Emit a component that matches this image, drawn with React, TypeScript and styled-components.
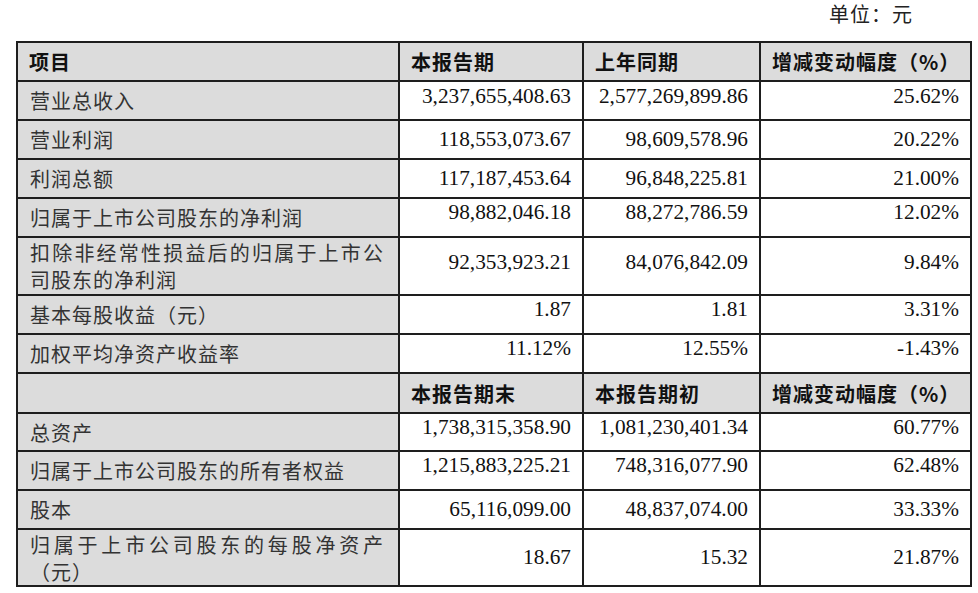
import React from "react";
import styled, { createGlobalStyle } from "styled-components";

const GlobalStyle = createGlobalStyle`
  html, body { margin: 0; padding: 0; background: #ffffff; }
  * { box-sizing: border-box; }
`;

const CJK = `"Noto Sans CJK SC", "Noto Sans", sans-serif`;
const NUM = `"Liberation Serif", "Noto Sans CJK SC", serif`;

const Page = styled.div`
  width: 978px;
  height: 593px;
  overflow: hidden;
  padding-left: 16px;
`;

const UnitLine = styled.div`
  height: 41px;
  padding-right: 65px;
  text-align: right;
  font-family: ${CJK};
  font-size: 20px;
  line-height: 27px;
  letter-spacing: 1px;
  color: #222;
`;

const Table = styled.table`
  width: 954px;
  table-layout: fixed;
  border-collapse: collapse;
  border: 2px solid #1e1e1e;
`;

const Cell = styled.td<{ $h: number; $gray?: boolean }>`
  height: ${(p) => p.$h}px;
  border: 2px solid #1e1e1e;
  background: ${(p) => (p.$gray ? "#dcdcdc" : "#ffffff")};
  vertical-align: middle;
  padding: 0;
`;

const HeadCell = styled(Cell)`
  padding: 0 10px 0 11px;
  font-family: ${CJK};
  font-weight: 700;
  font-size: 20px;
  letter-spacing: 1px;
  color: #111;
  text-align: left;
  white-space: nowrap;
`;

const LabelCell = styled(Cell)<{ $lh: number }>`
  padding: 0 14px 0 12px;
  font-family: ${CJK};
  font-weight: 400;
  font-size: 20px;
  line-height: ${(p) => p.$lh}px;
  letter-spacing: 1px;
  color: #333;
  text-align: justify;
`;

const NumCell = styled(Cell)<{ $shift: number }>`
  padding: 0 11px ${(p) => p.$shift * 2}px 0;
  font-family: ${NUM};
  font-size: 21.3px;
  color: #111;
  text-align: right;
  white-space: nowrap;
`;

type Row = {
  label: string;
  a: string;
  b: string;
  c: string;
  h: number;
  shift: number;
};

const top: Row[] = [
  { label: "营业总收入", a: "3,237,655,408.63", b: "2,577,269,899.86", c: "25.62%", h: 39, shift: 4 },
  { label: "营业利润", a: "118,553,073.67", b: "98,609,578.96", c: "20.22%", h: 39, shift: 0 },
  { label: "利润总额", a: "117,187,453.64", b: "96,848,225.81", c: "21.00%", h: 39, shift: 0 },
  { label: "归属于上市公司股东的净利润", a: "98,882,046.18", b: "88,272,786.59", c: "12.02%", h: 39, shift: 5 },
  { label: "扣除非经常性损益后的归属于上市公司股东的净利润", a: "92,353,923.21", b: "84,076,842.09", c: "9.84%", h: 58, shift: 4 },
  { label: "基本每股收益（元）", a: "1.87", b: "1.81", c: "3.31%", h: 39, shift: 5 },
  { label: "加权平均净资产收益率", a: "11.12%", b: "12.55%", c: "-1.43%", h: 39, shift: 5 },
];

const bottom: Row[] = [
  { label: "总资产", a: "1,738,315,358.90", b: "1,081,230,401.34", c: "60.77%", h: 38, shift: 5 },
  { label: "归属于上市公司股东的所有者权益", a: "1,215,883,225.21", b: "748,316,077.90", c: "62.48%", h: 39, shift: 5 },
  { label: "股本", a: "65,116,099.00", b: "48,837,074.00", c: "33.33%", h: 39, shift: 0 },
  { label: "归属于上市公司股东的每股净资产（元）", a: "18.67", b: "15.32", c: "21.87%", h: 57, shift: 0 },
];

const DataRow: React.FC<{ r: Row }> = ({ r }) => (
  <tr>
    <LabelCell $h={r.h} $gray $lh={27}>
      {r.label}
    </LabelCell>
    <NumCell $h={r.h} $shift={r.shift}>{r.a}</NumCell>
    <NumCell $h={r.h} $shift={r.shift}>{r.b}</NumCell>
    <NumCell $h={r.h} $shift={r.shift}>{r.c}</NumCell>
  </tr>
);

export default function App() {
  return (
    <Page>
      <GlobalStyle />
      <UnitLine>单位：元</UnitLine>
      <Table>
        <colgroup>
          <col style={{ width: 382 }} />
          <col style={{ width: 184 }} />
          <col style={{ width: 177 }} />
          <col style={{ width: 211 }} />
        </colgroup>
        <tbody>
          <tr>
            <HeadCell as="th" $h={39} $gray>项目</HeadCell>
            <HeadCell as="th" $h={39} $gray>本报告期</HeadCell>
            <HeadCell as="th" $h={39} $gray>上年同期</HeadCell>
            <HeadCell as="th" $h={39} $gray>增减变动幅度（%）</HeadCell>
          </tr>
          {top.map((r) => (
            <DataRow key={r.label} r={r} />
          ))}
          <tr>
            <HeadCell as="th" $h={40} $gray></HeadCell>
            <HeadCell as="th" $h={40} $gray>本报告期末</HeadCell>
            <HeadCell as="th" $h={40} $gray>本报告期初</HeadCell>
            <HeadCell as="th" $h={40} $gray>增减变动幅度（%）</HeadCell>
          </tr>
          {bottom.map((r) => (
            <DataRow key={r.label} r={r} />
          ))}
        </tbody>
      </Table>
    </Page>
  );
}
